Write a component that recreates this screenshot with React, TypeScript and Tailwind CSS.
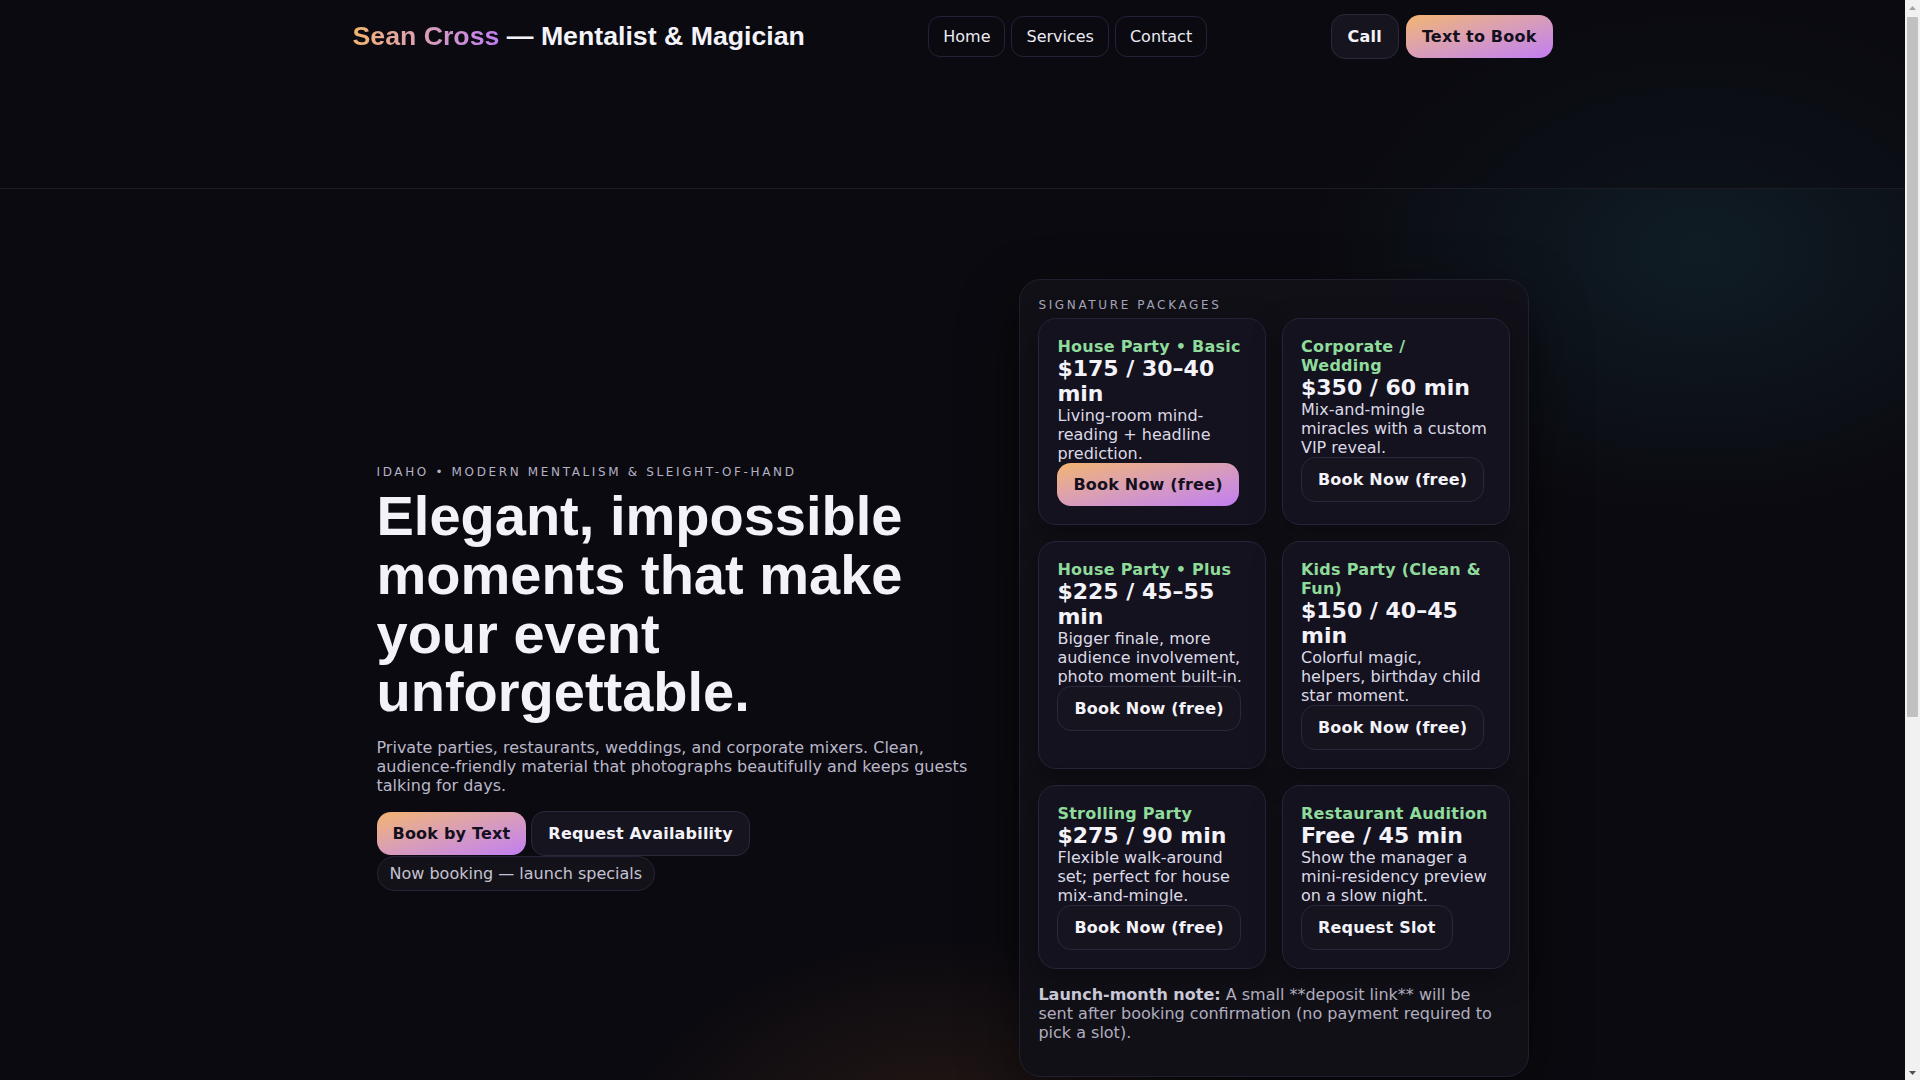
import React from 'react';

type Pkg = {
  title: string;
  price: string;
  desc: string;
  cta: string;
  primary?: boolean;
};

const packages: Pkg[] = [
  { title: 'House Party • Basic', price: '$175 / 30–40 min', desc: 'Living-room mind-reading + headline prediction.', cta: 'Book Now (free)', primary: true },
  { title: 'Corporate / Wedding', price: '$350 / 60 min', desc: 'Mix-and-mingle miracles with a custom VIP reveal.', cta: 'Book Now (free)' },
  { title: 'House Party • Plus', price: '$225 / 45–55 min', desc: 'Bigger finale, more audience involvement, photo moment built-in.', cta: 'Book Now (free)' },
  { title: 'Kids Party (Clean & Fun)', price: '$150 / 40–45 min', desc: 'Colorful magic, helpers, birthday child star moment.', cta: 'Book Now (free)' },
  { title: 'Strolling Party', price: '$275 / 90 min', desc: 'Flexible walk-around set; perfect for house mix-and-mingle.', cta: 'Book Now (free)' },
  { title: 'Restaurant Audition', price: 'Free / 45 min', desc: 'Show the manager a mini-residency preview on a slow night.', cta: 'Request Slot' },
];

const primaryBtn =
  'rounded-[14px] bg-linear-to-br from-[#f3b46c] to-[#c27cf2] px-4 py-3 font-bold tracking-[0.2px] text-[#15101d]';
const ghostBtn =
  'rounded-[14px] border border-[#2a2839] bg-[#16141f] px-4 py-3 font-bold tracking-[0.2px] text-[#f4f3f9]';

const PackageCard: React.FC<{ pkg: Pkg }> = ({ pkg }) => (
  <div className="flex flex-col items-start rounded-[18px] border border-[#262438] bg-[#14121f] p-[18px] shadow-[0_10px_30px_rgba(0,0,0,0.35)]">
    <div className="max-w-[187px] font-bold tracking-[0.25px] text-[#8fdb9b]">{pkg.title}</div>
    <div className="text-[22px] font-bold text-[#f4f3f9]">{pkg.price}</div>
    <p className="text-[#dcdae6]">{pkg.desc}</p>
    <button className={pkg.primary ? primaryBtn : ghostBtn}>{pkg.cta}</button>
  </div>
);

// classic browser scrollbar, the page is taller than the window
const ScrollStrip = () => (
  <aside className="flex h-screen w-[15px] shrink-0 flex-col bg-[#f1f1f1]">
    <div className="flex h-[15px] items-center justify-center">
      <svg width="7" height="4" viewBox="0 0 7 4"><path d="M3.5 0L7 4H0z" fill="#a3a3a3" /></svg>
    </div>
    <div className="mx-[2px] mt-[2px] h-[700px] rounded-[1px] bg-[#c1c1c1]" />
    <div className="flex-1" />
    <div className="flex h-[15px] items-center justify-center">
      <svg width="7" height="4" viewBox="0 0 7 4"><path d="M0 0h7L3.5 4z" fill="#505050" /></svg>
    </div>
  </aside>
);

export default function App() {
  return (
    <div
      className="flex h-screen overflow-hidden bg-[#0b0a10] text-[16px] leading-[normal] text-[#f4f3f9]"
      style={{ fontFamily: '"DejaVu Sans", sans-serif' }}
    >
      <div className="min-h-[1620px] flex-1 bg-[radial-gradient(560px_380px_at_1700px_250px,rgba(30,95,110,0.22),transparent_70%),radial-gradient(480px_320px_at_950px_1160px,rgba(150,85,40,0.2),transparent_70%)]">
        <header className="h-[189px] border-b border-[#1d1c2a] bg-[#0a0a0f]/50">
          <div className="mx-auto flex h-[72px] max-w-[1200px] items-center justify-between">
            <div className="text-[26.7px] font-bold text-[#f4f3f9] [font-family:'Liberation_Sans',sans-serif]">
              <span className="bg-linear-to-r from-[#f3b46c] to-[#c27cf2] bg-clip-text text-transparent">Sean Cross</span>{' '}
              — Mentalist &amp; Magician
            </div>
            <nav className="flex gap-1.5">
              {['Home', 'Services', 'Contact'].map((l) => (
                <a key={l} className="rounded-xl border border-[#24223a] px-3.5 py-2.5 text-[#ecebf3]">
                  {l}
                </a>
              ))}
            </nav>
            <div className="flex items-center gap-[7px]">
              <button className={ghostBtn}>Call</button>
              <button className={primaryBtn}>Text to Book</button>
            </div>
          </div>
        </header>

        <section className="mx-auto grid max-w-[1200px] grid-cols-[1.2fr_1fr] items-center gap-8 px-6 pt-[90px] pb-[90px]">
          <div>
            <div className="mb-2 text-[12px] uppercase tracking-[0.22em] text-[#b5b2c5]">
              Idaho • Modern Mentalism &amp; Sleight-of-Hand
            </div>
            <h1 className="mb-4 text-[56px] font-bold leading-[1.05] text-[#f3f2f8] [font-family:'Liberation_Sans',sans-serif]">
              Elegant, impossible moments that make your event unforgettable.
            </h1>
            <p className="text-[#bab7c9]">
              Private parties, restaurants, weddings, and corporate mixers. Clean, audience-friendly material that
              photographs beautifully and keeps guests talking for days.
            </p>
            <div className="mt-4 flex flex-wrap items-center gap-x-[5px] gap-y-0">
              <button className={primaryBtn}>Book by Text</button>
              <button className={ghostBtn}>Request Availability</button>
              <span className="rounded-full border border-[#26243a] bg-[#131219] px-3 py-[7px] text-[#c5c2d3]">
                Now booking — launch specials
              </span>
            </div>
          </div>

          <div className="rounded-[22px] border border-[#211f2e] bg-[#121118]/90 p-[18px] shadow-[0_20px_60px_rgba(0,0,0,0.45)]">
            <div className="mb-1.5 text-[12px] uppercase tracking-[0.22em] text-[#a9a6ba]">Signature Packages</div>
            <div className="grid grid-cols-2 gap-4">
              {packages.map((p) => (
                <PackageCard key={p.title} pkg={p} />
              ))}
            </div>
            <p className="my-4 text-[#b0adbf]">
              <b className="text-[#cac7d7]">Launch-month note:</b> A small **deposit link** will be sent after booking
              confirmation (no payment required to pick a slot).
            </p>
          </div>
        </section>
      </div>
      <ScrollStrip />
    </div>
  );
}
